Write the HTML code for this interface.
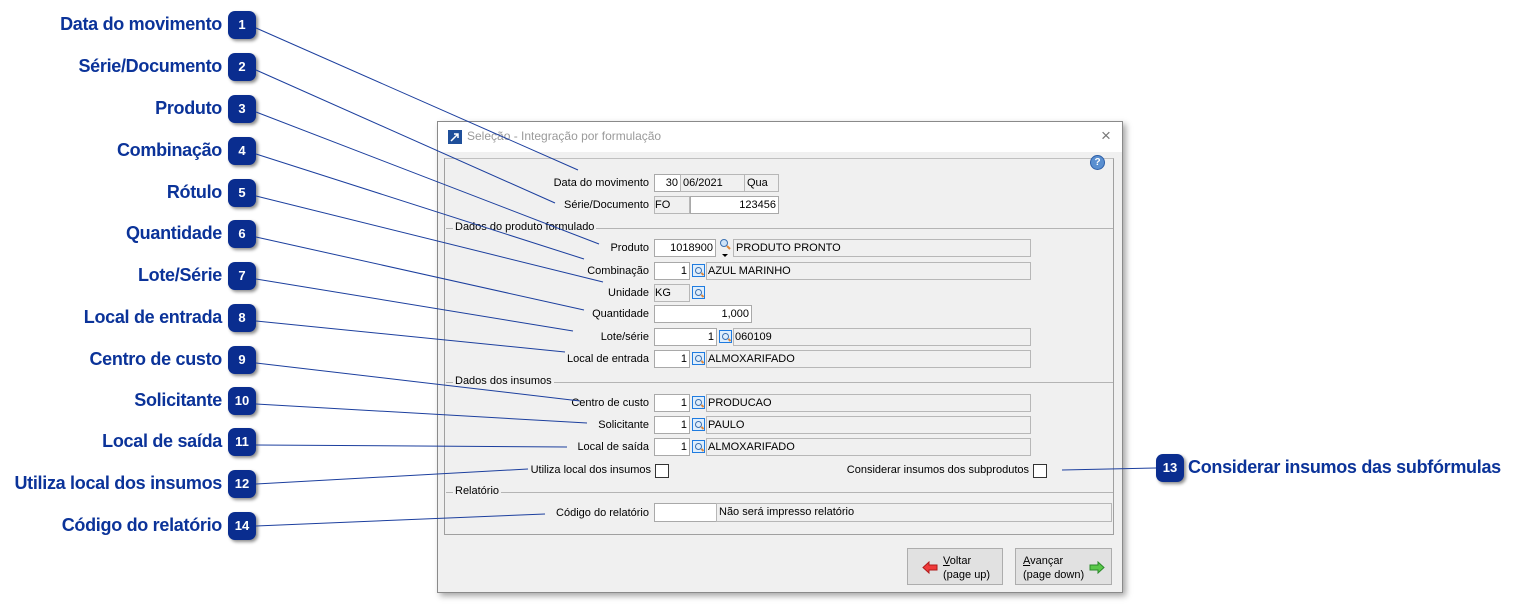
<!DOCTYPE html>
<html><head><meta charset="utf-8"><style>
body{margin:0;width:1516px;height:608px;background:#fff;position:relative;overflow:hidden;font-family:"Liberation Sans",sans-serif}
.lb{position:absolute;right:1294px;font-weight:bold;font-size:18px;color:#0b3399;white-space:nowrap;letter-spacing:-0.3px}
.bd{position:absolute;width:28px;height:28px;border-radius:7px;background:#0a2d8f;color:#fff;font-weight:bold;font-size:13px;text-align:center;line-height:28px;box-shadow:2px 2px 3px rgba(0,0,0,.45)}
.dlg{position:absolute;left:437px;top:121px;width:684px;height:470px;border:1px solid #8a8a8a;background:#f0f0f0;box-shadow:3px 3px 6px rgba(0,0,0,.35)}
.f{position:absolute;font-size:11px;color:#000;white-space:nowrap}
.r{text-align:right}
.in{position:absolute;height:18px;background:#fff;border:1px solid #a9a9a9;box-sizing:border-box;font-size:11px;line-height:17px;padding:0 2px;white-space:nowrap}
.gr{background:#f0f0f0;border-color:#b7b7b7}
.ic{position:absolute;width:13px;height:13px;border:1px solid #1e7be0;background:#dfeefc;box-sizing:border-box}
.ic:after{content:"";position:absolute;left:2px;top:2px;width:5px;height:5px;border:1px solid #3a6fb0;border-radius:50%}
.ic:before{content:"";position:absolute;left:8px;top:8px;width:3px;height:2px;background:#e0883a;transform:rotate(45deg)}
.sec{position:absolute;height:1px;background:#b4b4b4}
.cb{position:absolute;width:12px;height:12px;border:1px solid #333;background:#fff}
.btn{position:absolute;top:548px;height:37px;border:1px solid #adadad;background:#e1e1e1;box-sizing:border-box;font-size:11px;line-height:14px}
</style></head><body>
<div class="lb" style="top:14px">Data do movimento</div>
<div class="lb" style="top:56px">Série/Documento</div>
<div class="lb" style="top:98px">Produto</div>
<div class="lb" style="top:140px">Combinação</div>
<div class="lb" style="top:182px">Rótulo</div>
<div class="lb" style="top:223px">Quantidade</div>
<div class="lb" style="top:265px">Lote/Série</div>
<div class="lb" style="top:307px">Local de entrada</div>
<div class="lb" style="top:349px">Centro de custo</div>
<div class="lb" style="top:390px">Solicitante</div>
<div class="lb" style="top:431px">Local de saída</div>
<div class="lb" style="top:473px">Utiliza local dos insumos</div>
<div class="lb" style="top:515px">Código do relatório</div>
<div class="lb" style="top:457px;left:1188px;right:auto">Considerar insumos das subfórmulas</div>
<div class="bd" style="left:228px;top:11px">1</div>
<div class="bd" style="left:228px;top:53px">2</div>
<div class="bd" style="left:228px;top:95px">3</div>
<div class="bd" style="left:228px;top:137px">4</div>
<div class="bd" style="left:228px;top:179px">5</div>
<div class="bd" style="left:228px;top:220px">6</div>
<div class="bd" style="left:228px;top:262px">7</div>
<div class="bd" style="left:228px;top:304px">8</div>
<div class="bd" style="left:228px;top:346px">9</div>
<div class="bd" style="left:228px;top:387px">10</div>
<div class="bd" style="left:228px;top:428px">11</div>
<div class="bd" style="left:228px;top:470px">12</div>
<div class="bd" style="left:1156px;top:454px">13</div>
<div class="bd" style="left:228px;top:512px">14</div>

<div class="dlg">
<div style="position:absolute;left:0;top:0;right:0;height:30px;background:#fff"></div>
<svg style="position:absolute;left:10px;top:8px" width="14" height="14"><rect width="14" height="14" fill="#1f4f9a"/><path d="M3 11 L10 4 M6 4 H10 V8" stroke="#fff" stroke-width="1.5" fill="none"/></svg>
<div class="f" style="left:29px;top:7px;font-size:12px;color:#9a9a9a">Seleção - Integração por formulação</div>
<div class="f" style="left:663px;top:4px;font-size:17px;color:#777">×</div>
<div style="position:absolute;left:6px;top:36px;width:670px;height:377px;border:1px solid #a0a0a0;border-top-color:#c0c0c0;box-sizing:border-box"></div>
<div style="position:absolute;left:652px;top:33px;width:13px;height:13px;border-radius:50%;background:#5a8fd0;border:1px solid #2d5fa8;color:#fff;font-size:10px;font-weight:bold;text-align:center;line-height:13px">?</div>
</div>
<div class="sec" style="left:446px;top:228px;width:667px"></div>
<div class="f" style="left:453px;top:221px;background:#f0f0f0;padding:0 2px">Dados do produto formulado</div>
<div class="sec" style="left:446px;top:382px;width:667px"></div>
<div class="f" style="left:453px;top:375px;background:#f0f0f0;padding:0 2px">Dados dos insumos</div>
<div class="sec" style="left:446px;top:492px;width:667px"></div>
<div class="f" style="left:453px;top:485px;background:#f0f0f0;padding:0 2px">Relatório</div>

<div class="f r" style="right:867px;top:177px">Data do movimento</div>
<div class="in r" style="left:654px;top:174px;width:27px">30</div>
<div class="in gr" style="left:680px;top:174px;width:65px">06/2021</div>
<div class="in gr" style="left:744px;top:174px;width:35px">Qua</div>
<div class="f r" style="right:867px;top:199px">Série/Documento</div>
<div class="in gr" style="left:654px;top:196px;width:36px;padding:0">FO</div>
<div class="in r" style="left:690px;top:196px;width:89px">123456</div>

<div class="f r" style="right:867px;top:242px">Produto</div>
<div class="in r" style="left:654px;top:239px;width:62px">1018900</div>
<svg style="position:absolute;left:719px;top:238px" width="14" height="22"><circle cx="5" cy="5" r="3.5" fill="#cfe3f7" stroke="#3a6fb0"/><path d="M8 8 L11 11" stroke="#e0883a" stroke-width="2"/><path d="M3 16 H9 L6 19 Z" fill="#000"/></svg>
<div class="in gr" style="left:733px;top:239px;width:298px">PRODUTO PRONTO</div>
<div class="f r" style="right:867px;top:265px">Combinação</div>
<div class="in r" style="left:654px;top:262px;width:36px">1</div><div class="ic" style="left:692px;top:264px"></div>
<div class="in gr" style="left:706px;top:262px;width:325px;padding:0 1px">AZUL MARINHO</div>
<div class="f r" style="right:867px;top:287px">Unidade</div>
<div class="in gr" style="left:654px;top:284px;width:36px;padding:0">KG</div><div class="ic" style="left:692px;top:286px"></div>
<div class="f r" style="right:867px;top:308px">Quantidade</div>
<div class="in r" style="left:654px;top:305px;width:98px">1,000</div>
<div class="f r" style="right:867px;top:331px">Lote/série</div>
<div class="in r" style="left:654px;top:328px;width:63px">1</div><div class="ic" style="left:719px;top:330px"></div>
<div class="in gr" style="left:733px;top:328px;width:298px;padding:0 1px">060109</div>
<div class="f r" style="right:867px;top:353px">Local de entrada</div>
<div class="in r" style="left:654px;top:350px;width:36px">1</div><div class="ic" style="left:692px;top:352px"></div>
<div class="in gr" style="left:706px;top:350px;width:325px;padding:0 1px">ALMOXARIFADO</div>

<div class="f r" style="right:867px;top:397px">Centro de custo</div>
<div class="in r" style="left:654px;top:394px;width:36px">1</div><div class="ic" style="left:692px;top:396px"></div>
<div class="in gr" style="left:706px;top:394px;width:325px;padding:0 1px">PRODUCAO</div>
<div class="f r" style="right:867px;top:419px">Solicitante</div>
<div class="in r" style="left:654px;top:416px;width:36px">1</div><div class="ic" style="left:692px;top:418px"></div>
<div class="in gr" style="left:706px;top:416px;width:325px;padding:0 1px">PAULO</div>
<div class="f r" style="right:867px;top:441px">Local de saída</div>
<div class="in r" style="left:654px;top:438px;width:36px">1</div><div class="ic" style="left:692px;top:440px"></div>
<div class="in gr" style="left:706px;top:438px;width:325px;padding:0 1px">ALMOXARIFADO</div>
<div class="f r" style="right:865px;top:464px">Utiliza local dos insumos</div>
<div class="cb" style="left:655px;top:464px"></div>
<div class="f r" style="right:487px;top:464px">Considerar insumos dos subprodutos</div>
<div class="cb" style="left:1033px;top:464px"></div>
<div class="f r" style="right:867px;top:507px">Código do relatório</div>
<div class="in" style="left:654px;top:503px;width:63px;height:19px"></div>
<div class="in gr" style="left:716px;top:503px;width:396px;height:19px;line-height:17px">Não será impresso relatório</div>

<div class="btn" style="left:907px;width:96px"><svg style="position:absolute;left:14px;top:12px" width="16" height="13"><path d="M1 6.5 L7 1 V4 H15 V9 H7 V12 Z" fill="#f03a3a" stroke="#b01a1a"/></svg><span style="position:absolute;left:35px;top:5px"><u>V</u>oltar<br>(page up)</span></div>
<div class="btn" style="left:1015px;width:97px"><span style="position:absolute;left:7px;top:5px"><u>A</u>vançar<br>(page down)</span><svg style="position:absolute;left:73px;top:12px" width="16" height="13"><path d="M15 6.5 L9 1 V4 H1 V9 H9 V12 Z" fill="#5ac84a" stroke="#2a8a2a"/></svg></div>

<svg width="1516" height="608" style="position:absolute;left:0;top:0" fill="none" stroke="#1c3f9e" stroke-width="1">
<line x1="256" y1="28" x2="578" y2="170"/>
<line x1="256" y1="70" x2="555" y2="203"/>
<line x1="256" y1="112" x2="599" y2="244"/>
<line x1="256" y1="154" x2="584" y2="259"/>
<line x1="256" y1="196" x2="603" y2="282"/>
<line x1="256" y1="237" x2="584" y2="310"/>
<line x1="256" y1="279" x2="573" y2="331"/>
<line x1="256" y1="321" x2="565" y2="352"/>
<line x1="256" y1="363" x2="580" y2="401"/>
<line x1="256" y1="404" x2="587" y2="423"/>
<line x1="256" y1="445" x2="567" y2="447"/>
<line x1="256" y1="484" x2="528" y2="469"/>
<line x1="256" y1="526" x2="545" y2="514"/>
<line x1="1156" y1="468" x2="1062" y2="470"/>
</svg>
</body></html>
